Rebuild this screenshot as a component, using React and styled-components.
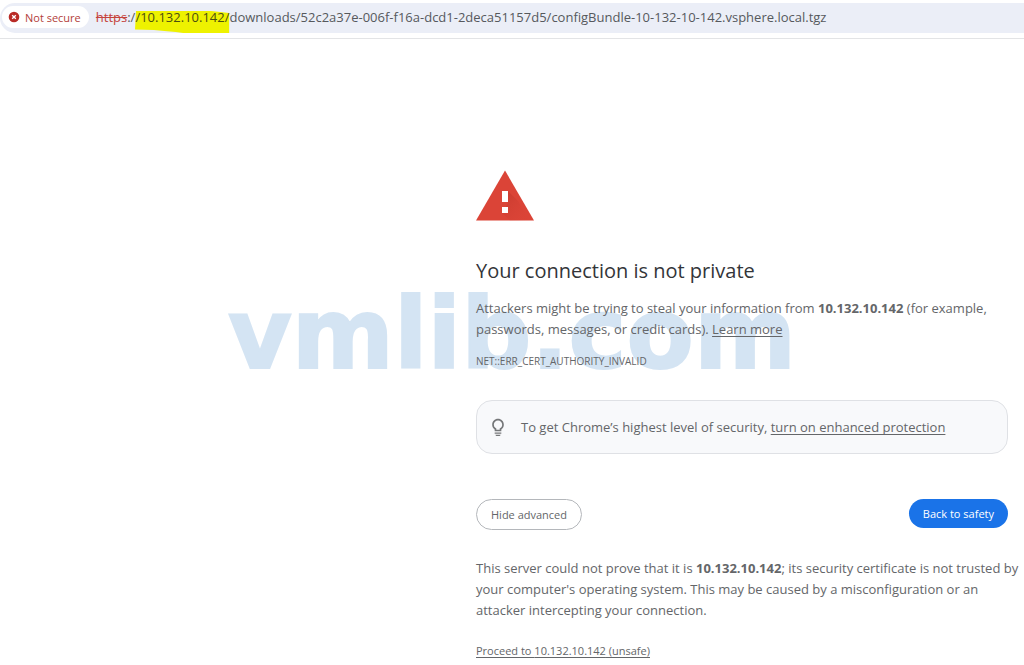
import React from "react";
import styled, { createGlobalStyle } from "styled-components";

const HOST = "10.132.10.142";

export default function App() {
  return (
    <>
      <GlobalStyle />
      <Toolbar>
        <AddressBar>
          <SecurityChip type="button">
            <NotSecureIcon />
            Not secure
          </SecurityChip>
          <Url>
            <Scheme>https</Scheme>:/
            <Marked>
              <MarkerStroke />
              <span>/{HOST}/</span>
            </Marked>
            downloads/52c2a37e-006f-f16a-dcd1-2deca51157d5/configBundle-10-132-10-142.vsphere.local.tgz
          </Url>
        </AddressBar>
      </Toolbar>
      <Page>
        <Watermark aria-hidden="true">vmlib.com</Watermark>
        <Interstitial>
          <WarningIcon />
          <Title>Your connection is not private</Title>
          <Text>
            Attackers might be trying to steal your information from <strong>{HOST}</strong> (for example,
            passwords, messages, or credit cards). <Link href="#learn-more">Learn more</Link>
          </Text>
          <ErrorCode>NET::ERR_CERT_AUTHORITY_INVALID</ErrorCode>
          <Promo>
            <BulbIcon />
            <Text>
              To get Chrome’s highest level of security, <Link href="#protection">turn on enhanced protection</Link>
            </Text>
          </Promo>
          <Actions>
            <Button type="button">Hide advanced</Button>
            <Button type="button" $primary>
              Back to safety
            </Button>
          </Actions>
          <Details>
            This server could not prove that it is <strong>{HOST}</strong>; its security certificate is not trusted by
            your computer's operating system. This may be caused by a misconfiguration or an attacker intercepting your
            connection.
          </Details>
          <Proceed>
            <Link href="#proceed">Proceed to {HOST} (unsafe)</Link>
          </Proceed>
        </Interstitial>
      </Page>
    </>
  );
}

function NotSecureIcon() {
  return (
    <svg width="12" height="12" viewBox="0 0 12 12" aria-hidden="true">
      <circle cx="6" cy="6" r="5.3" fill="#b92b27" />
      <path d="M4.2 4.2l3.6 3.6M7.8 4.2L4.2 7.8" stroke="#fff" strokeWidth="1.3" />
    </svg>
  );
}

function MarkerStroke() {
  return (
    <Stroke viewBox="0 0 90 22" preserveAspectRatio="none" aria-hidden="true">
      <path d="M1 0H73L90 2V22H46L39 21L28 20L18 19L0 18.500Z" fill="#eef200" />
    </Stroke>
  );
}

function WarningIcon() {
  return (
    <Triangle width="58" height="51" viewBox="0 0 58 51" aria-hidden="true">
      <defs>
        <linearGradient id="shade" x1="0" y1="0" x2="1" y2="1">
          <stop offset="0" stopColor="#b83327" stopOpacity="0.6" />
          <stop offset="1" stopColor="#db4437" stopOpacity="0" />
        </linearGradient>
      </defs>
      <path d="M29 0.500L58 50.500H0Z" fill="#db4437" />
      <path d="M32 21L42 31L53.500 50.500H34L26 43L32 33Z" fill="url(#shade)" />
      <path d="M26 21h6v11h-6zM26 37h6v6h-6z" fill="#fff" />
    </Triangle>
  );
}

function BulbIcon() {
  return (
    <svg width="20" height="20" viewBox="0 0 24 24" fill="#757779" aria-hidden="true">
      <path d="M9 20.500c0 .55.45 1 1 1h4c.55 0 1-.45 1-1v-.5H9zM8 17.500h8v1.500H8zM12 1C8.140 1 5 4.140 5 8c0 2.380 1.190 4.470 3 5.740V16h8v-2.260c1.810-1.270 3-3.360 3-5.740 0-3.860-3.140-7-7-7zm2.850 11.100l-.85.6V14h-4v-1.300l-.85-.6A4.997 4.997 0 0 1 7 8c0-2.760 2.240-5 5-5s5 2.240 5 5c0 1.630-.8 3.160-2.150 4.100z" />
    </svg>
  );
}

const GlobalStyle = createGlobalStyle`
  * {
    box-sizing: border-box;
  }
  body {
    margin: 0;
    background: #fff;
    color: #646669;
    font-family: "Open Sans", "Noto Sans", sans-serif;
    font-size: 13px;
  }
`;
const Toolbar = styled.header`
  padding: 3px 0 5px;
  border-bottom: 1px solid #e3e4e6;
`;
const AddressBar = styled.div`
  display: flex;
  align-items: center;
  gap: 7px;
  height: 30px;
  padding: 0 0 2px 2px;
  border-radius: 15px 0 0 15px;
  background: #ebeef7;
`;
const SecurityChip = styled.button`
  display: flex;
  align-items: center;
  gap: 5px;
  height: 22px;
  padding: 0 8px 0 6px;
  border: 0;
  border-radius: 11px;
  background: #fff;
  color: #b3403a;
  font: inherit;
  font-size: 11px;
  white-space: nowrap;
`;
const Url = styled.div`
  color: #56595d;
  white-space: nowrap;
`;
const Scheme = styled.s`
  color: #c5443c;
`;
const Marked = styled.mark`
  position: relative;
  background: none;
  color: #4c4e10;
  span {
    position: relative;
  }
`;
const Stroke = styled.svg`
  position: absolute;
  top: 3px;
  left: 0;
  width: 100%;
  height: 22px;
`;
const Page = styled.main`
  position: relative;
  padding: 131px 16px 0;
`;
const Watermark = styled.div`
  position: absolute;
  top: 241px;
  left: 0;
  width: 100%;
  color: #d4e4f3;
  font-family: "DejaVu Sans", sans-serif;
  font-size: 98px;
  font-weight: 700;
  line-height: 108px;
  text-align: center;
  -webkit-text-stroke: 2px #d4e4f3;
  pointer-events: none;
`;
const Interstitial = styled.div`
  position: relative;
  max-width: 532px;
  margin-left: auto;
`;
const Triangle = styled.svg`
  display: block;
`;
const Title = styled.h1`
  margin: 34px 0 11px;
  color: #333539;
  font-size: 20px;
  font-weight: 400;
  line-height: 32px;
`;
const Text = styled.p`
  margin: 0;
  line-height: 21px;
`;
const Details = styled(Text)`
  margin-right: -12px;
`;
const Link = styled.a`
  color: inherit;
  text-decoration: underline;
  text-decoration-skip-ink: none;
  text-underline-offset: 2px;
`;
const ErrorCode = styled.div`
  margin: 13px 0 31px;
  font-size: 10px;
  line-height: 16px;
`;
const Promo = styled.div`
  display: flex;
  align-items: center;
  gap: 13px;
  padding: 16px 11px 15px;
  border: 1px solid #dfe1e5;
  border-radius: 16px;
  background: #f8f9fb;
`;
const Actions = styled.div`
  display: flex;
  justify-content: space-between;
  align-items: flex-start;
  margin: 45px 0 28px;
`;
const Button = styled.button`
  height: ${(props) => (props.$primary ? "29px" : "31px")};
  padding: 0 14px;
  border: ${(props) => (props.$primary ? "0" : "1px solid #b4b7bb")};
  border-radius: 16px;
  background: ${(props) => (props.$primary ? "#1a73e8" : "#fff")};
  color: ${(props) => (props.$primary ? "#fff" : "#646669")};
  font: inherit;
  font-size: 11px;
`;
const Proceed = styled.p`
  margin: 20px 0 0;
  font-size: 11px;
  line-height: 20px;
`;
